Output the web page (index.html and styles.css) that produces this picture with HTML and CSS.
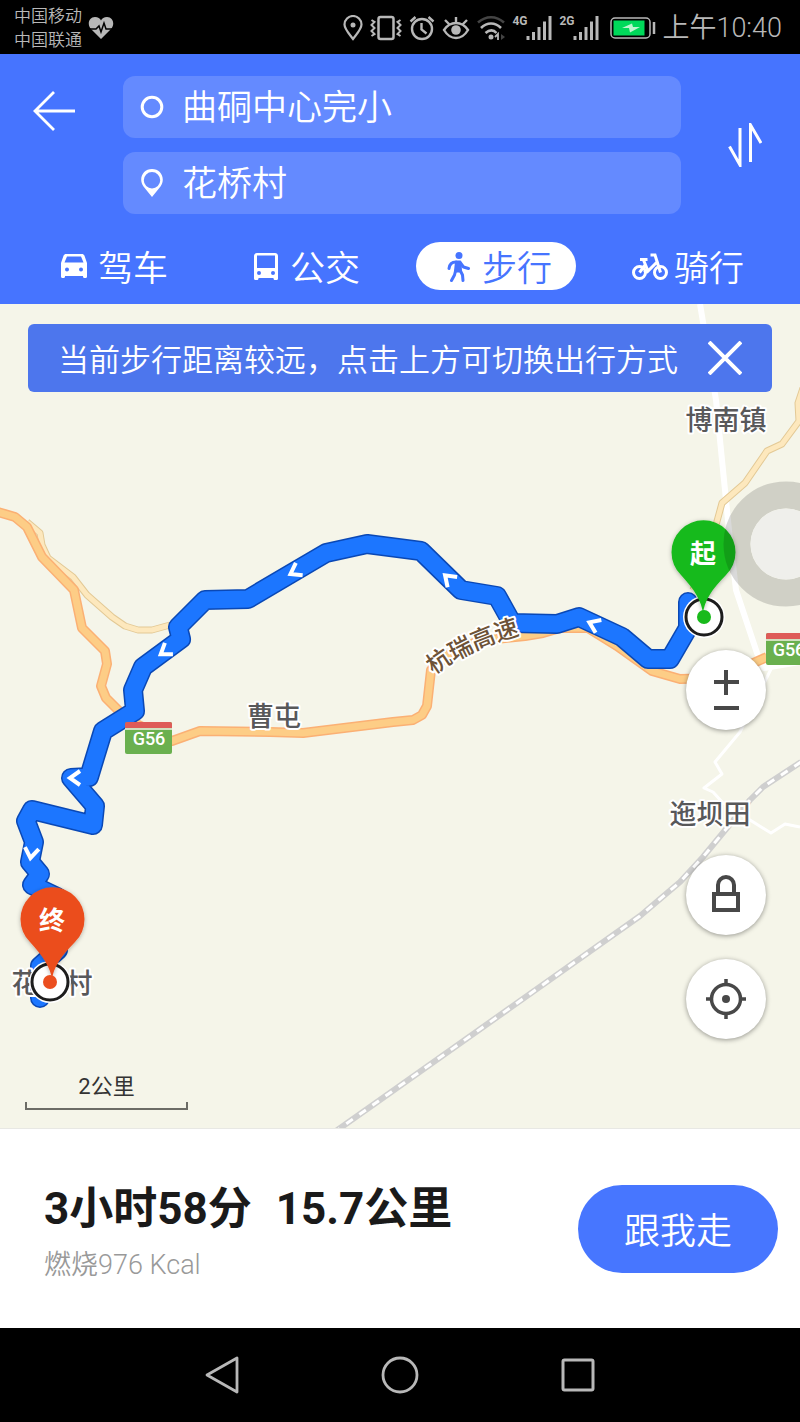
FILE: index.html
```html
<!DOCTYPE html>
<html lang="zh-CN">
<head>
<meta charset="utf-8">
<meta name="viewport" content="width=device-width, initial-scale=1">
<title>步行路线</title>
<link rel="stylesheet" href="styles.css">
</head>
<body>
<div class="status">
  <div class="carriers"><span>中国移动</span><span>中国联通</span></div>
  <svg class="heart" width="26" height="24" viewBox="0 0 26 24" aria-hidden="true"><path d="M13 23 2.500 12.500C-1 8 1 1 7 1c3 0 5 1.500 6 3.500C14 2.500 16 1 19 1c6 0 8 7 4.500 11.500z" fill="#b8b8b8"/><path d="M0 13h8l3-3 2 6 3-9 2 6h8" fill="none" stroke="#000" stroke-width="1.500"/></svg>
  <div class="status-icons">
    <svg width="20" height="26" viewBox="0 0 20 26" fill="none" stroke="#b8b8b8" stroke-width="2.200"><path d="M10 24C6 18.500 1.500 14 1.500 9.500a8.500 8.500 0 0 1 17 0C18.500 14 14 18.500 10 24z"/><circle cx="10" cy="10" r="2.500" fill="#b8b8b8" stroke="none"/></svg>
    <svg width="32" height="26" viewBox="0 0 32 26" fill="none" stroke="#b8b8b8" stroke-width="2.500"><rect x="8.500" y="2" width="15" height="22" rx="2"/><path d="M1.500 5l3 2-3 3 3 3-3 3 3 3-3 2M30.500 5l-3 2 3 3-3 3 3 3-3 3 3 2" stroke-width="2"/></svg>
    <svg width="26" height="26" viewBox="0 0 26 26" fill="none" stroke="#b8b8b8" stroke-width="2.400"><circle cx="13" cy="14" r="10"/><path d="M12.500 8v6.500l5 4M1.500 6.500 6.500 2M19.500 2l5 4.500"/></svg>
    <svg width="28" height="26" viewBox="0 0 28 26" fill="none" stroke="#b8b8b8" stroke-width="2.400"><path d="M2 15C5 10.500 9 8 14 8s9 2.500 12 7c-3 5-7 8-12 8S5 20 2 15zM14 8V2M7 9 3 5M21 9l4-4"/><circle cx="14" cy="15" r="4.800" fill="#b8b8b8" stroke="none"/></svg>
    <svg width="28" height="26" viewBox="0 0 28 26" fill="none" stroke="#b8b8b8" stroke-width="2.600"><path d="M1 7.500c8-7 18-7 26 0" stroke="#444"/><path d="M4 13c6-6 14-6 20 0M8.500 18c4-3.500 8-3.500 11 0"/><circle cx="14" cy="22" r="2.500" fill="#b8b8b8" stroke="none"/><path d="m18 22 3-3v6" stroke-width="1.800"/><path d="m24 19 4 3-4 3z" fill="#444" stroke="none"/></svg>
    <div class="signal"><span>4G</span><svg width="26" height="26" viewBox="0 0 26 26" stroke="#b8b8b8" stroke-width="3"><path d="M2 25v-4M7.500 25v-8M13 25V12M18.500 25V6.500M24 25V1"/></svg></div>
    <div class="signal"><span>2G</span><svg width="26" height="26" viewBox="0 0 26 26" stroke="#b8b8b8" stroke-width="3"><path d="M2 25v-4M7.500 25v-8M13 25V12M18.500 25V6.500M24 25V1"/></svg></div>
    <svg class="battery" width="46" height="22" viewBox="0 0 46 22"><rect x="1" y="1" width="39" height="20" rx="4" fill="none" stroke="#b8b8b8" stroke-width="1.500"/><rect x="3.500" y="3.500" width="31" height="15" fill="#00d95a"/><path d="m12 11 10-4.500 1 3.500h7l-10 5.500-1-4.500z" fill="#bdf5ce"/><path d="M44 5v12" stroke="#b8b8b8" stroke-width="2.500"/></svg>
  </div>
  <time class="clock">上午10:40</time>
</div>

<header class="header">
  <div class="search">
    <button class="icon-btn back" aria-label="返回"><svg width="44" height="42" viewBox="0 0 44 42" fill="none" stroke="#fff" stroke-width="2.800"><path d="M43 21H3M22 2 3 21l19 19"/></svg></button>
    <div class="fields">
      <label class="field"><svg width="24" height="30" viewBox="0 0 24 30" fill="none" stroke="#fff" stroke-width="3"><circle cx="12" cy="15" r="9.800"/></svg><input type="text" value="曲硐中心完小" aria-label="起点"></label>
      <label class="field"><svg width="24" height="30" viewBox="0 0 24 30"><path d="M12 29 3.500 18.500C-2 10.500 3 1 12 1s14 9.500 8.500 17.500zM12 4a8.200 8.200 0 1 0 0 16.400A8.200 8.200 0 1 0 12 4z" fill="#fff" fill-rule="evenodd"/></svg><input type="text" value="花桥村" aria-label="终点"></label>
    </div>
    <button class="icon-btn swap" aria-label="交换起点终点"><svg width="34" height="44" viewBox="0 0 34 44" fill="none" stroke="#fff" stroke-width="3"><path d="M1.500 23.500 12 42V5M33 20 22.500 2v37"/></svg></button>
  </div>
  <nav class="tabs">
    <button class="tab"><svg width="36" height="32" viewBox="0 0 36 32" fill="#fff"><path fill-rule="evenodd" d="M10 4h16c1 0 2 .6 2.400 1.600L31 13v13.500c0 .8-.5 1.500-1.500 1.500h-1c-1 0-1.500-.7-1.500-1.500V26H9v.5c0 .8-.5 1.500-1.500 1.500h-1C5.500 28 5 27.300 5 26.500V13l2.600-7.400C8 4.600 9 4 10 4zm1 2.500L8.500 12.500h19L25 6.500zM11 17.500a2 2 0 1 0 0 4 2 2 0 0 0 0-4zm14 0a2 2 0 1 0 0 4 2 2 0 0 0 0-4z"/></svg>驾车</button>
    <button class="tab"><svg width="36" height="32" viewBox="0 0 36 32" fill="#fff"><path fill-rule="evenodd" d="M9 3h18c1.700 0 3 1.300 3 3v22.500c0 .8-.5 1.500-1.500 1.500H27c-1 0-1.500-.7-1.500-1.500V28h-15v.5c0 .8-.5 1.500-1.500 1.500H7.500C6.500 30 6 29.300 6 28.500V6c0-1.700 1.300-3 3-3zm0 2.500V18h18V5.500zM11 21a2 2 0 1 0 0 4 2 2 0 0 0 0-4zm14 0a2 2 0 1 0 0 4 2 2 0 0 0 0-4z"/></svg>公交</button>
    <button class="tab active" aria-pressed="true"><svg width="36" height="32" viewBox="0 0 36 32" fill="none" stroke="#4674ff" stroke-linecap="round" stroke-linejoin="round"><circle cx="19" cy="5.500" r="3.500" fill="#4674ff" stroke="none"/><path d="M16.500 12h3.500l.5 9h-5z" fill="#4674ff" stroke-width="3"/><path d="M16 12c-4 0-6.500 2-7 6.500M20.500 13l3 4 5 1.500M15.500 21l-1 4-3 5.500M20.500 21l2 4 .5 5.500" stroke-width="3"/></svg>步行</button>
    <button class="tab"><svg width="36" height="32" viewBox="0 0 36 32" fill="none" stroke="#fff" stroke-width="3"><circle cx="7.500" cy="22.500" r="6"/><circle cx="28.500" cy="22.500" r="6"/><path d="m7.500 22.500 6-8M8 9.500h7.500M11.500 10l4.500 11 10-10M28.500 22.500 23 5h-4.500M16 21l-4 1.500"/></svg>骑行</button>
  </nav>
</header>

<main class="map">
  <svg class="canvas" viewBox="0 304 800 825" preserveAspectRatio="xMidYMid slice" role="img" aria-label="路线地图">
    <defs>
      <path id="highway" d="M-2 512L15 517 27 527 42 557 74 590 82 628 105 651 107 664 101 686 106 698 128 720 172 741 200 731 270 732 303 733 393 722 413 720 422 715 427 706 431 670 448 655 478 641 525 636 543 633 560 628 588 628 617 646 652 671 680 679 720 678 767 657"/>
      <path id="branch" d="M27 522L40 533 42 545 48 558 73 577 87 595 112 617 125 626 138 630H152L170 625"/>
      <path id="north" d="M803 388L798 403 799 421 782 444 767 451 745 483 722 503 716 525 693 590"/>
      <path id="route" d="M688 602V628L670 659H648L622 637 579 617 557 624 512 623 497 596 461 590 421 551 367 544 326 553 248 599 205 600 178 627 181 639 143 667 133 690 135 711 103 731 89 777 71 778 95 806 93 825 32 810 26 821 34 842 30 862 40 874 32 885 57 897 58 950 40 966V998"/>
      <path id="roadname" d="M434 675Q468 648 530 632"/>
      <path id="chevron" d="M6-7-4 0 6 7"/>
      <g id="shield"><rect width="47" height="32" rx="2" fill="#6ab04f"/><path d="M0 6V2a2 2 0 0 1 2-2h43a2 2 0 0 1 2 2v4z" fill="#de5b58"/><path d="M0 7h47" stroke="#f3f1e4" stroke-width="1.500"/></g>
      <filter id="shade" x="-30%" y="-30%" width="160%" height="160%"><feDropShadow dx="0" dy="1" stdDeviation="2" flood-opacity="0.300"/></filter>
    </defs>
    <g fill="none" stroke-linejoin="round">
      <path d="M700 304l16 96 13 130 7 60 21 63 7 15 36-6" stroke="#fff" stroke-width="6"/>
      <path d="M757 653l14 16-31 63-25 30 7 12-18 14 9 4 10 11 27 17 21 13 14-9 15 3" stroke="#fff" stroke-width="3"/>
      <path d="M801 762l-38 25-13 13-47 57-23 25-40 34-270 191-34 24" stroke="#cfcfcf" stroke-width="6"/>
      <path d="M801 762l-38 25-13 13-47 57-23 25-40 34-270 191-34 24" stroke="#fff" stroke-width="3" stroke-dasharray="8 8"/>
      <use href="#branch" stroke="#e3c995" stroke-width="7"/><use href="#north" stroke="#e3c995" stroke-width="7"/>
      <use href="#branch" stroke="#fde8bd" stroke-width="5"/><use href="#north" stroke="#fde8bd" stroke-width="5"/>
      <use href="#highway" stroke="#fbb074" stroke-width="10"/><use href="#highway" stroke="#fdcd86" stroke-width="7"/>
      <g stroke-linecap="round"><use href="#route" stroke="#0a48b5" stroke-width="20"/><use href="#route" stroke="#1c76ff" stroke-width="17"/></g>
      <g stroke="#fff" stroke-width="4" stroke-linejoin="miter">
        <use href="#chevron" transform="translate(593 624) rotate(24)"/>
        <use href="#chevron" transform="translate(448 578) rotate(43)"/>
        <use href="#chevron" transform="translate(294 572) rotate(-29)"/>
        <use href="#chevron" transform="translate(164 652) rotate(-35)"/>
        <use href="#chevron" transform="translate(74 778)"/>
        <use href="#chevron" transform="translate(31 854) rotate(-82)"/>
      </g>
    </g>
    <g class="place">
      <text x="726" y="430">博南镇</text>
      <text x="274" y="726">曹屯</text>
      <text x="710" y="824">迤坝田</text>
      <text x="52" y="993">花桥村</text>
    </g>
    <text class="road"><textPath href="#roadname">杭瑞高速</textPath></text>
    <use href="#shield" x="125" y="722"/><text class="shield-text" x="149" y="745">G56</text>
    <use href="#shield" x="766" y="633"/><text class="shield-text" x="789" y="656">G56</text>

    <circle cx="704" cy="617" r="21" fill="#fff"/><circle cx="704" cy="617" r="18" fill="#fff" stroke="#1d1d1d" stroke-width="3"/>
    <circle cx="50" cy="982" r="21" fill="#fff"/><circle cx="50" cy="982" r="18" fill="#fff" stroke="#1d1d1d" stroke-width="3"/>
    <path d="M703 614C702 601 694 589 681 575a32 32 0 1 1 45 0C712 589 704 601 703 614z" fill="#19ba1b" filter="url(#shade)"/><circle cx="704" cy="617" r="7" fill="#19ba1b"/>
    <path d="M52 980C51 968 43 956 30 942a32 32 0 1 1 45 0C61 956 53 968 52 980z" fill="#eb4e1f" filter="url(#shade)"/><circle cx="50" cy="982" r="7" fill="#eb4e1f"/>
    <text class="pin-text" x="703" y="563">起</text>
    <text class="pin-text" x="52" y="930">终</text>
    <circle cx="786" cy="544" r="49" fill="none" stroke="#000" stroke-opacity="0.150" stroke-width="27"/><circle cx="786" cy="544" r="35.500" fill="#efefeb"/>
  </svg>

  <div class="notice"><span>当前步行距离较远，点击上方可切换出行方式</span><button class="icon-btn" aria-label="关闭"><svg width="34" height="34" viewBox="0 0 34 34" stroke="#fff" stroke-width="4"><path d="m1 1 32 32M33 1 1 33"/></svg></button></div>

  <div class="controls">
    <div class="round zoom">
      <button class="icon-btn" aria-label="放大"><svg width="26" height="26" viewBox="0 0 26 26" stroke="#484848" stroke-width="4"><path d="M1 13h25M13 1v25"/></svg></button>
      <button class="icon-btn" aria-label="缩小"><svg width="26" height="14" viewBox="0 0 26 14" stroke="#484848" stroke-width="4"><path d="M1 7h25"/></svg></button>
    </div>
    <button class="round" aria-label="锁定"><svg width="40" height="40" viewBox="0 0 40 40" fill="none" stroke="#484848" stroke-width="4"><path d="M8 19h24v16H8zM12 19V10a8 8 0 0 1 16 0v9"/></svg></button>
    <button class="round" aria-label="定位"><svg width="40" height="40" viewBox="0 0 40 40" fill="none" stroke="#484848" stroke-width="3.500"><circle cx="20" cy="20" r="14.500"/><path d="M20 0v6M20 34v6M0 20h6M34 20h6"/><circle cx="20" cy="20" r="4" fill="#484848" stroke="none"/></svg></button>
  </div>
  <div class="scale">2公里</div>
</main>

<section class="summary">
  <div class="trip">
    <h1 class="totals"><span>3小时58分</span><span>15.7公里</span></h1>
    <p class="burn">燃烧976 Kcal</p>
  </div>
  <button class="go">跟我走</button>
</section>

<footer class="system">
  <button class="icon-btn" aria-label="后退"><svg width="38" height="40" viewBox="0 0 38 40" fill="none" stroke="#b8b8b8" stroke-width="2.800" stroke-linejoin="round"><path d="M34 3v34L4 20z"/></svg></button>
  <button class="icon-btn" aria-label="主屏幕"><svg width="38" height="38" viewBox="0 0 38 38" fill="none" stroke="#b8b8b8" stroke-width="2.800"><circle cx="19" cy="19" r="17"/></svg></button>
  <button class="icon-btn" aria-label="最近任务"><svg width="36" height="36" viewBox="0 0 36 36" fill="none" stroke="#b8b8b8" stroke-width="3"><rect x="3" y="3" width="30" height="30" rx="1.500"/></svg></button>
</footer>
</body>
</html>
```

FILE: styles.css
```css
* { box-sizing: border-box; }

body {
  margin: 0;
  min-height: 100vh;
  display: flex;
  flex-direction: column;
  font-family: Roboto, "Noto Sans CJK SC", sans-serif;
  background: #fff;
}

svg { display: block; flex: none; }

button, input { font: inherit; }

.icon-btn {
  display: flex;
  align-items: center;
  justify-content: center;
  padding: 0;
  border: 0;
  background: none;
}

/* status bar */
.status {
  display: flex;
  align-items: center;
  height: 54px;
  padding: 2px 18px 0 14px;
  background: #000;
  color: #b8b8b8;
}

.carriers {
  display: flex;
  flex-direction: column;
  font-size: 17px;
  font-weight: 350;
  line-height: 24px;
}

.heart { margin-left: 6px; }

.status-icons {
  display: flex;
  align-items: center;
  gap: 7px;
  margin-left: auto;
}

.signal { display: flex; align-items: flex-start; }

.signal span {
  width: 14px;
  font-size: 12px;
  font-weight: 700;
  line-height: 12px;
}

.battery { margin-left: 4px; }

.clock {
  margin-left: 6px;
  font-size: 27px;
  font-weight: 350;
  line-height: 52px;
}

/* search header */
.header { background: #4674ff; padding: 22px 0 14px; }

.search {
  display: grid;
  grid-template-columns: 123px 1fr 119px;
}

.back { height: 70px; padding-right: 15px; }

.swap { padding-left: 8px; }

.fields { display: grid; gap: 14px; }

.field {
  display: flex;
  align-items: center;
  gap: 18px;
  height: 62px;
  padding: 0 17px;
  border-radius: 12px;
  background: #648aff;
}

.field input {
  flex: 1;
  min-width: 0;
  padding: 0 0 6px;
  border: 0;
  outline: 0;
  background: none;
  color: #fff;
  font-family: "Noto Sans CJK SC", sans-serif;
  font-size: 35px;
  font-weight: 350;
}

.tabs {
  display: grid;
  grid-template-columns: repeat(4, 1fr);
  justify-items: center;
  padding: 28px 16px 0;
}

.tab {
  display: flex;
  align-items: center;
  justify-content: center;
  gap: 6px;
  width: 160px;
  height: 48px;
  padding: 0;
  border: 0;
  border-radius: 24px;
  background: none;
  color: #fff;
  font-family: "Noto Sans CJK SC", sans-serif;
  font-size: 35px;
  font-weight: 350;
  line-height: 48px;
}

.tab.active { background: #fff; color: #4674ff; }

/* map */
.map {
  position: relative;
  flex: 1;
  min-height: 700px;
  overflow: hidden;
  padding: 20px 28px;
  background: #f5f5e9;
}

.canvas {
  position: absolute;
  inset: 0;
  width: 100%;
  height: 100%;
}

.place text {
  font-size: 27px;
  font-weight: 500;
  text-anchor: middle;
  fill: #58585a;
  stroke: #fff;
  stroke-width: 4px;
  stroke-linejoin: round;
  paint-order: stroke;
}

.road {
  font-size: 24px;
  font-weight: 500;
  fill: #6d5236;
  stroke: #fff;
  stroke-width: 4px;
  stroke-linejoin: round;
  paint-order: stroke;
}

.shield-text {
  font-size: 18px;
  font-weight: 500;
  text-anchor: middle;
  fill: #fff;
}

.pin-text {
  font-size: 26px;
  font-weight: 700;
  text-anchor: middle;
  fill: #fff;
}

.notice {
  position: relative;
  display: flex;
  align-items: center;
  justify-content: space-between;
  height: 68px;
  padding: 0 30px;
  border-radius: 6px;
  background: #4d76ed;
  color: #fff;
  font-family: "Noto Sans CJK SC", sans-serif;
  font-size: 31px;
  font-weight: 350;
  line-height: 68px;
  white-space: nowrap;
}

.controls {
  position: absolute;
  right: 34px;
  bottom: 90px;
  display: flex;
  flex-direction: column;
  gap: 24px;
}

.round {
  display: flex;
  align-items: center;
  justify-content: center;
  width: 80px;
  height: 80px;
  padding: 0;
  border: 0;
  border-radius: 50%;
  background: #fff;
  box-shadow: 0 1px 5px rgba(0, 0, 0, 0.4);
}

.zoom { flex-direction: column; gap: 6px; margin-bottom: 101px; padding-top: 4px; }

.scale {
  position: absolute;
  left: 25px;
  bottom: 19px;
  width: 163px;
  padding-bottom: 8px;
  color: #333;
  font-size: 22px;
  line-height: 30px;
  text-align: center;
}

.scale::after {
  content: "";
  position: absolute;
  inset: auto 0 0;
  height: 6px;
  border: 2px solid #6c6c66;
  border-top: 0;
}

/* trip summary */
.summary {
  position: relative;
  display: flex;
  align-items: center;
  justify-content: space-between;
  height: 199px;
  padding: 0 22px 0 44px;
  box-shadow: 0 -1px 0 #e8e8e4;
}

.trip { padding-top: 4px; }

.totals {
  display: flex;
  gap: 24px;
  margin: 0;
  color: #1a1a1a;
  font-size: 44px;
  font-weight: 700;
  line-height: 60px;
}

.burn {
  margin: 8px 0 0;
  color: #999;
  font-size: 27px;
  font-weight: 350;
  line-height: 36px;
}

.go {
  width: 200px;
  height: 88px;
  padding: 0 0 2px;
  border: 0;
  border-radius: 44px;
  background: #4776ff;
  color: #fff;
  font-size: 36px;
  font-weight: 350;
}

/* system navigation */
.system {
  display: flex;
  justify-content: center;
  height: 94px;
  background: #000;
}

.system .icon-btn { width: 178px; }
```
